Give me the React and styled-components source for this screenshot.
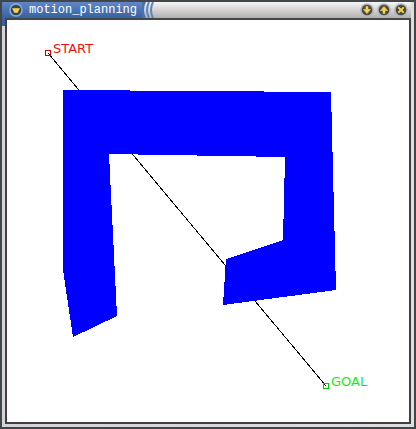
import React from "react";
import styled, { createGlobalStyle } from "styled-components";

const GlobalStyle = createGlobalStyle`
  *, *::before, *::after { box-sizing: border-box; }
  body { margin: 0; background: #414649; }
`;

const Frame = styled.main`
  display: flex;
  flex-direction: column;
  border: 2px solid #414649;
  background:
    linear-gradient(#38619f, #38619f) 0 0 / 3px 24px no-repeat,
    linear-gradient(90deg, #d4d4d8, #dededb);
`;

const TitleBar = styled.header`
  display: flex;
  align-items: stretch;
  height: 18px;
  margin-right: 3px;
  border-bottom: 2px solid #464646;
  margin-left: 3px;
  background: linear-gradient(#f6f6f6, #b0b0b0);
`;

const Caption = styled.div`
  display: flex;
  align-items: center;
  gap: 6px;
  margin-left: -3px;
  padding: 0 5px 0 7px;
  background: linear-gradient(#6086c8, #38619f);
`;

const Title = styled.h1`
  margin: 0;
  color: #fff;
  font: 400 12px/16px "Liberation Mono", monospace;
`;

const Ridges = styled.svg`
  display: block;
  width: 16px;
  height: 16px;
`;

const Controls = styled.div`
  display: flex;
  align-items: center;
  gap: 3px;
  margin-left: auto;
  padding-right: 3px;
`;

const RoundButton = styled.button`
  display: block;
  width: 14px;
  height: 14px;
  padding: 0;
  border: 0;
  background: none;
`;

const Glyph = styled.svg`
  display: block;
`;

const Canvas = styled.section`
  margin: 0 3px 3px;
  border: 2px solid #3f3e44;
  border-top: 0;
  background: #fff;
`;

const Plot = styled.svg`
  display: block;
  width: 100%;
  height: auto;
`;

const PointLabel = styled.text`
  font: 400 13px "DejaVu Sans", sans-serif;
  fill: ${(p) => p.$color};
`;

const shapes = {
  menu: "M3.5 5.5H10.5L8.5 9.5H5.5Z",
  down: "M6 3.5H8V6.5H10.5L7 10.5L3.5 6.5H6Z",
  up: "M6 10.5H8V7.5H10.5L7 3.5L3.5 7.5H6Z",
  close: "M4 5L5 4L7 6L9 4L10 5L8 7L10 9L9 10L7 8L5 10L4 9L6 7Z",
};

function TitleButton({ kind, label }) {
  const menu = kind === "menu";
  return (
    <RoundButton type="button" aria-label={label}>
      <Glyph width="14" height="14" viewBox="0 0 14 14">
        <circle cx="7" cy="7" r="6.8" fill={menu ? "#91abd6" : "#b4b4b4"} />
        <circle cx="7" cy="7" r="5.3" fill={menu ? "#34445e" : "#4c4b47"} />
        <path d={shapes[kind]} fill="#f5d548" stroke="#f5d548" strokeWidth=".6" />
      </Glyph>
    </RoundButton>
  );
}

export default function App() {
  return (
    <>
      <GlobalStyle />
      <Frame>
        <TitleBar>
          <Caption>
            <TitleButton kind="menu" label="Window menu" />
            <Title>motion_planning</Title>
          </Caption>
          <Ridges viewBox="0 0 16 16" fill="none" aria-hidden="true">
            <path d="M0 0H4Q0 8 4 16H0Z" fill="#4a72b2" />
            <path d="M7 0Q3 8 7 16M11 0Q7 8 11 16" stroke="#5f84bd" strokeWidth="2" />
          </Ridges>
          <Controls>
            <TitleButton kind="down" label="Minimize" />
            <TitleButton kind="up" label="Maximize" />
            <TitleButton kind="close" label="Close" />
          </Controls>
        </TitleBar>
        <Canvas>
          <Plot viewBox="7 20 402 402" role="img" aria-label="Path from start to goal around an obstacle">
            <g shapeRendering="crispEdges">
              <path d="M48 53L326 386" stroke="#000" fill="none" />
              <path
                d="M63 90L331 92L336 290L223 305L226 259L283 240L285 157L109 154L117 316L73 337L63 270Z"
                fill="#00f"
              />
              <rect x="45.5" y="50.5" width="5" height="5" fill="none" stroke="#c80000" />
              <rect x="323.5" y="383.5" width="5" height="5" fill="none" stroke="#00c800" />
            </g>
            <PointLabel x="53" y="53" $color="#f01010">START</PointLabel>
            <PointLabel x="331" y="386" $color="#10f010">GOAL</PointLabel>
          </Plot>
        </Canvas>
      </Frame>
    </>
  );
}
